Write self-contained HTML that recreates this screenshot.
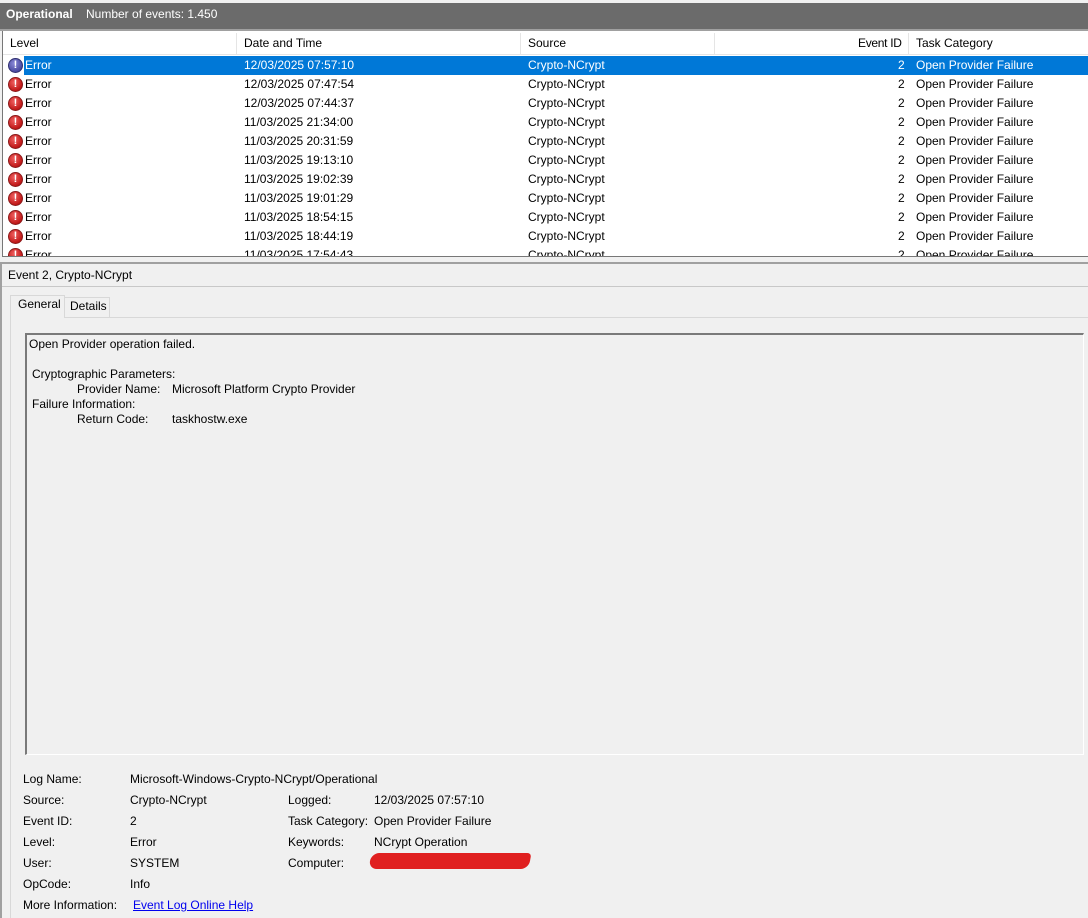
<!DOCTYPE html>
<html><head><style>
*{margin:0;padding:0;box-sizing:border-box}
body{width:1088px;height:918px;background:#f0f0f0;font-family:"Liberation Sans",sans-serif;font-size:12px;color:#000;position:relative;overflow:hidden}
.a{position:absolute;white-space:nowrap}
.hdr{position:absolute;left:0;top:3px;width:1088px;height:28px;background:#6b6b6b;border-bottom:2px solid #a0a0a0}
.list{position:absolute;left:2px;top:31px;width:1086px;height:226px;background:#fff;border-left:1px solid #777;border-bottom:1px solid #777;overflow:hidden}
.row{position:absolute;left:0;width:1086px;height:19px}
.row span{position:absolute;top:2px;white-space:nowrap}
.ic{position:absolute;left:5px;top:2px;width:15px;height:15px;border-radius:50%;background:radial-gradient(circle at 40% 35%,#f06060,#c01818 70%,#901010);border:1px solid #8a1a1a;color:#fff;font-weight:bold;font-size:11px;line-height:13px;text-align:center}
.sel .ic{background:radial-gradient(circle at 40% 35%,#8a8ad8,#4a4aa0 70%,#303080);border-color:#303070}
.sel .bg{position:absolute;left:21px;top:0;width:1065px;height:19px;background:#0078d7}
.sel span{color:#fff}
</style></head><body>
<div class="hdr"></div>
<div class="a" style="left:6px;top:7px;color:#fff;font-weight:bold">Operational</div>
<div class="a" style="left:86px;top:7px;color:#fff">Number of events: 1.450</div>
<div class="list">
 <div class="a" style="left:0;top:2px;width:1086px;height:22px;border-bottom:1px solid #e5e5e5"></div>
 <div class="a" style="left:233px;top:2px;width:1px;height:22px;background:#e5e5e5"></div>
 <div class="a" style="left:517px;top:2px;width:1px;height:22px;background:#e5e5e5"></div>
 <div class="a" style="left:711px;top:2px;width:1px;height:22px;background:#e5e5e5"></div>
 <div class="a" style="left:905px;top:2px;width:1px;height:22px;background:#e5e5e5"></div>
 <div class="a" style="left:7px;top:5px">Level</div>
 <div class="a" style="left:241px;top:5px">Date and Time</div>
 <div class="a" style="left:525px;top:5px">Source</div>
 <div class="a" style="left:855px;top:5px;letter-spacing:-0.3px">Event ID</div>
 <div class="a" style="left:913px;top:5px">Task Category</div>
 <div id="rows"></div>
</div>
<div class="a" style="left:0;top:262px;width:1088px;height:2px;background:#a0a0a0"></div>
<div class="a" style="left:0;top:264px;width:2px;height:654px;background:#a0a0a0"></div>
<div class="a" style="left:8px;top:268px">Event 2, Crypto-NCrypt</div>
<div class="a" style="left:2px;top:286px;width:1086px;height:1px;background:#c8c8c8"></div>
<div class="a" style="left:10px;top:317px;width:1078px;height:601px;border-left:1px solid #d8d8d8;border-top:1px solid #d8d8d8"></div>
<div class="a" style="left:10px;top:295px;width:55px;height:23px;background:#f0f0f0;border:1px solid #d8d8d8;border-bottom:none"></div>
<div class="a" style="left:18px;top:297px">General</div>
<div class="a" style="left:65px;top:297px;width:45px;height:20px;border:1px solid #d8d8d8;border-bottom:none;border-left:none"></div>
<div class="a" style="left:70px;top:299px">Details</div>
<div class="a" style="left:25px;top:333px;width:1059px;height:422px;border-top:2px solid #7a7a7a;border-left:2px solid #7a7a7a;border-right:1px solid #fff;border-bottom:1px solid #fff"></div>
<div class="a" style="left:29px;top:337px">Open Provider operation failed.</div>
<div class="a" style="left:32px;top:367px">Cryptographic Parameters:</div>
<div class="a" style="left:77px;top:382px">Provider Name:</div>
<div class="a" style="left:172px;top:382px">Microsoft Platform Crypto Provider</div>
<div class="a" style="left:32px;top:397px">Failure Information:</div>
<div class="a" style="left:77px;top:412px">Return Code:</div>
<div class="a" style="left:172px;top:412px">taskhostw.exe</div>
<div class="a" style="left:23px;top:772px">Log Name:</div><div class="a" style="left:130px;top:772px">Microsoft-Windows-Crypto-NCrypt/Operational</div>
<div class="a" style="left:23px;top:793px">Source:</div><div class="a" style="left:130px;top:793px">Crypto-NCrypt</div>
<div class="a" style="left:288px;top:793px">Logged:</div><div class="a" style="left:374px;top:793px">12/03/2025 07:57:10</div>
<div class="a" style="left:23px;top:814px">Event ID:</div><div class="a" style="left:130px;top:814px">2</div>
<div class="a" style="left:288px;top:814px">Task Category:</div><div class="a" style="left:374px;top:814px">Open Provider Failure</div>
<div class="a" style="left:23px;top:835px">Level:</div><div class="a" style="left:130px;top:835px">Error</div>
<div class="a" style="left:288px;top:835px">Keywords:</div><div class="a" style="left:374px;top:835px">NCrypt Operation</div>
<div class="a" style="left:23px;top:856px">User:</div><div class="a" style="left:130px;top:856px">SYSTEM</div>
<div class="a" style="left:288px;top:856px">Computer:</div>
<div class="a" style="left:370px;top:853px;width:160px;height:16px;background:#e02020;border-radius:8px 4px 8px 8px;transform:skewX(-10deg)"></div>
<div class="a" style="left:23px;top:877px">OpCode:</div><div class="a" style="left:130px;top:877px">Info</div>
<div class="a" style="left:23px;top:898px">More Information:</div><div class="a" style="left:133px;top:898px;color:#0000ee;text-decoration:underline">Event Log Online Help</div>
<script>
var d=["12/03/2025 07:57:10","12/03/2025 07:47:54","12/03/2025 07:44:37","11/03/2025 21:34:00","11/03/2025 20:31:59","11/03/2025 19:13:10","11/03/2025 19:02:39","11/03/2025 19:01:29","11/03/2025 18:54:15","11/03/2025 18:44:19","11/03/2025 17:54:43"];
var h="";
d.forEach(function(t,i){h+='<div class="row'+(i==0?' sel':'')+'" style="top:'+(25+i*19)+'px">'+(i==0?'<div class="bg"></div>':'')+'<div class="ic">!</div><span style="left:22px">Error</span><span style="left:241px">'+t+'</span><span style="left:525px">Crypto-NCrypt</span><span style="left:895px">2</span><span style="left:913px">Open Provider Failure</span></div>';});
document.getElementById("rows").innerHTML=h;
</script>
</body></html>
